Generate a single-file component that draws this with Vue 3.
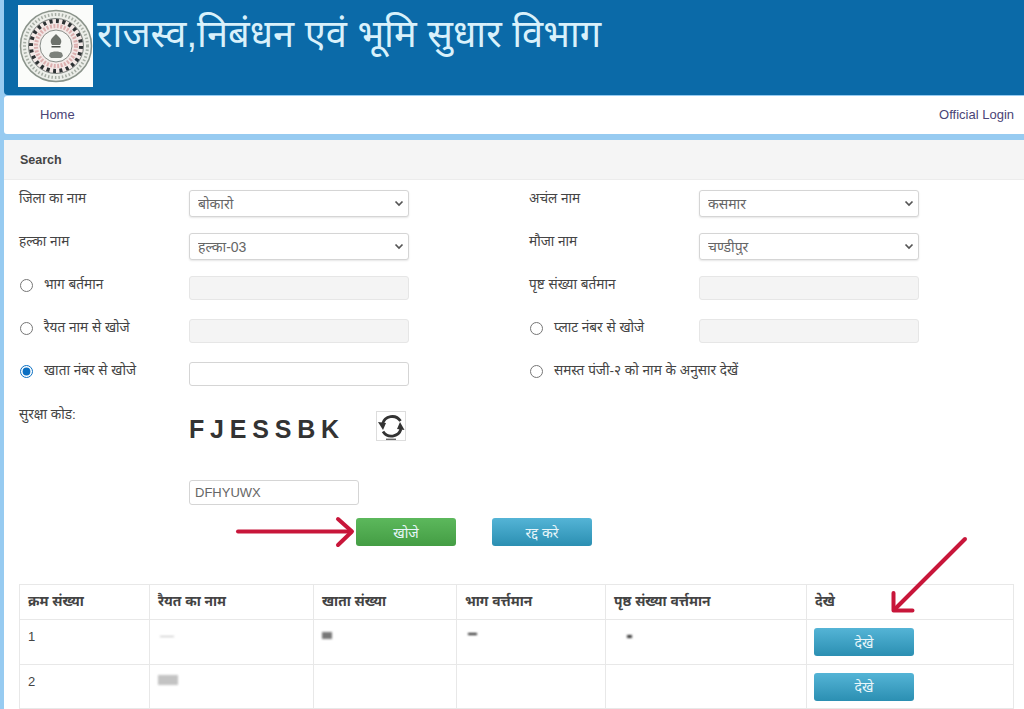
<script setup>
const columns = ['क्रम संख्या', 'रैयत का नाम', 'खाता संख्या', 'भाग वर्त्तमान', 'पृष्ठ संख्या वर्त्तमान', 'देखे']
const rows = [
  { no: 1, smudges: ['name-a', 'khata', 'bhag', 'page'] },
  { no: 2, smudges: ['name-b'] },
]
const has = (row, key) => row.smudges.includes(key)
</script>

<template>
  <div class="page">
    <header class="banner">
      <div class="logo">
        <svg class="seal" width="74" height="74" viewBox="0 0 74 74">
          <circle cx="37" cy="37" r="35.500" fill="#eceee9" stroke="#8b948b" stroke-width="1.500" />
          <circle cx="37" cy="37" r="31.500" fill="none" stroke="#a7aea5" stroke-width="3" stroke-dasharray="1.500 2" />
          <circle cx="37" cy="37" r="27.500" fill="#f3e9e7" stroke="#5c6360" stroke-width="0.800" />
          <circle cx="37" cy="37" r="25" fill="none" stroke="#2c3133" stroke-width="4" stroke-dasharray="3 3.500" />
          <circle cx="37" cy="37" r="20" fill="none" stroke="#dcb0b0" stroke-width="4" stroke-dasharray="2 1.500" />
          <circle cx="37" cy="37" r="16" fill="#f6f7f4" stroke="#6b726d" stroke-width="0.800" />
          <path d="M32 34c-1-3 1-5 2-6l3-3 3 3c1 1 3 3 2 6l-1 2h-8z" fill="#6d726c" />
          <path d="M32.500 37h9v1.500h-9z" fill="#4a4f4a" />
          <path d="M31 44c2-2 10-2 12 0l1 3-2 2H32l-2-2z" fill="#7c817b" />
        </svg>
      </div>
      <h1 class="title">राजस्व,निबंधन एवं भूमि सुधार विभाग</h1>
    </header>

    <nav class="nav">
      <a class="nav-link">Home</a>
      <a class="nav-link">Official Login</a>
    </nav>

    <main class="panel">
      <div class="panel-head">Search</div>

      <div class="form">
        <label class="lbl">जिला का नाम</label>
        <div class="sel-wrap">
          <select class="ctl sel"><option>बोकारो</option></select>
          <svg class="chev" width="10" height="7" viewBox="0 0 10 7"><path d="M1.500 1.500L5 5l3.500-3.500" fill="none" stroke="#555" stroke-width="1.700" /></svg>
        </div>
        <label class="lbl">अचंल नाम</label>
        <div class="sel-wrap">
          <select class="ctl sel"><option>कसमार</option></select>
          <svg class="chev" width="10" height="7" viewBox="0 0 10 7"><path d="M1.500 1.500L5 5l3.500-3.500" fill="none" stroke="#555" stroke-width="1.700" /></svg>
        </div>

        <label class="lbl">हल्का नाम</label>
        <div class="sel-wrap">
          <select class="ctl sel"><option>हल्का-03</option></select>
          <svg class="chev" width="10" height="7" viewBox="0 0 10 7"><path d="M1.500 1.500L5 5l3.500-3.500" fill="none" stroke="#555" stroke-width="1.700" /></svg>
        </div>
        <label class="lbl">मौजा नाम</label>
        <div class="sel-wrap">
          <select class="ctl sel"><option>चण्डीपुर</option></select>
          <svg class="chev" width="10" height="7" viewBox="0 0 10 7"><path d="M1.500 1.500L5 5l3.500-3.500" fill="none" stroke="#555" stroke-width="1.700" /></svg>
        </div>

        <label class="lbl"><input type="radio" name="mode" class="radio" />भाग बर्तमान</label>
        <input class="ctl txt" disabled />
        <label class="lbl">पृष्ट संख्या बर्तमान</label>
        <input class="ctl txt" disabled />

        <label class="lbl"><input type="radio" name="mode" class="radio" />रैयत नाम से खोजे</label>
        <input class="ctl txt" disabled />
        <label class="lbl"><input type="radio" name="mode" class="radio" />प्लाट नंबर से खोजे</label>
        <input class="ctl txt" disabled />

        <label class="lbl"><input type="radio" name="mode" class="radio" checked />खाता नंबर से खोजे</label>
        <input class="ctl txt" />
        <label class="lbl wide"><input type="radio" name="mode" class="radio" />समस्त पंजी-२ को नाम के अनुसार देखें</label>
      </div>

      <div class="captcha">
        <label class="lbl">सुरक्षा कोड:</label>
        <span class="code">FJESSBK</span>
        <span class="refresh">
          <svg width="28" height="28" viewBox="0 0 28 28" fill="none">
            <path d="M5.500 12A10 10 0 0 1 23.500 9" stroke="#333" stroke-width="2.800" />
            <path d="M24 17A10 10 0 0 1 6 19.500" stroke="#333" stroke-width="2.800" />
            <path d="M1 10L9 11 6 18zM27.500 18L20 17 23 10z" fill="#333" />
            <path d="M9 27.300h10" stroke="#666" stroke-width="1.400" />
          </svg>
        </span>
      </div>

      <input class="answer" value="DFHYUWX" />

      <div class="actions">
        <button class="btn green">खोजे</button>
        <button class="btn blue">रद्द करे</button>
      </div>

      <table class="results">
        <colgroup>
          <col class="c1" /><col class="c2" /><col class="c3" /><col class="c4" /><col class="c5" /><col class="c6" />
        </colgroup>
        <thead>
          <tr><th v-for="c in columns" :key="c">{{ c }}</th></tr>
        </thead>
        <tbody>
          <tr v-for="row in rows" :key="row.no">
            <td>{{ row.no }}</td>
            <td>
              <i v-if="has(row, 'name-a')" class="smudge faint"></i>
              <i v-if="has(row, 'name-b')" class="smudge wide-blot"></i>
            </td>
            <td><i v-if="has(row, 'khata')" class="smudge small"></i></td>
            <td><i v-if="has(row, 'bhag')" class="smudge dash"></i></td>
            <td><i v-if="has(row, 'page')" class="smudge dot"></i></td>
            <td class="view-cell"><button class="btn blue">देखे</button></td>
          </tr>
        </tbody>
      </table>
    </main>

    <svg class="annot" width="1024" height="709" viewBox="0 0 1024 709" fill="none">
      <g stroke="#c8163a" stroke-width="4" stroke-linecap="round" stroke-linejoin="round">
        <path d="M238 531.500H351" />
        <path d="M338 519l14 12.500-14 13.500" />
        <path d="M965 539L894 610" />
        <path d="M893.500 593v17.500h19" />
      </g>
    </svg>
  </div>
</template>

<style scoped>
.page {
  position: relative;
  height: 709px;
  overflow: hidden;
  padding-left: 4px;
  box-sizing: border-box;
  background: #97cbf1;
  font-family: "Liberation Sans", "Noto Sans", sans-serif;
  color: #333;
}
.banner {
  height: 95px;
  display: flex;
  align-items: flex-start;
  background: #0b6aa8;
  border-bottom-left-radius: 4px;
  margin-bottom: 1px;
}
.logo {
  width: 75px;
  height: 82px;
  margin: 5px 0 0 14px;
  background: #fbfcfa;
  display: flex;
  align-items: center;
  justify-content: center;
  flex-shrink: 0;
}
.seal {
  filter: blur(0.4px);
}
.title {
  margin: 8px 0 0 4px;
  font-size: 38px;
  line-height: 52px;
  font-weight: 400;
  color: #d9f1fb;
  white-space: nowrap;
}
.nav {
  height: 38px;
  box-sizing: border-box;
  display: flex;
  justify-content: space-between;
  align-items: center;
  padding: 0 10px 2px 36px;
  background: #fff;
  border-radius: 3px 0 0 3px;
  margin-bottom: 6px;
}
.nav-link {
  font-size: 13px;
  color: #4a4476;
}
.panel {
  height: 569px;
  background: #fff;
  border-radius: 3px 0 0 0;
}
.panel-head {
  height: 40px;
  box-sizing: border-box;
  padding: 13px 16px 0;
  background: #f5f5f5;
  border-bottom: 1px solid #ececec;
  font-size: 12.500px;
  font-weight: 700;
  color: #444;
}
.form {
  display: grid;
  grid-template-columns: 170px 220px 120px 170px 220px;
  grid-auto-rows: 27px;
  row-gap: 16px;
  padding: 10px 0 0 15px;
}
.form > :nth-child(4n + 3) {
  grid-column-start: 4;
}
.form > :nth-child(4n + 2) {
  grid-column-start: 2;
}
.form > :nth-child(4n) {
  grid-column-start: 5;
}
.lbl {
  display: block;
  font-size: 13.600px;
  line-height: 17px;
  color: #444;
  white-space: nowrap;
}
.form > .wide {
  grid-column: 4 / span 2;
}
.radio {
  width: 13px;
  height: 13px;
  margin: 0 11px 0 1px;
  vertical-align: -3px;
  accent-color: #0b6fc2;
}
.ctl {
  display: block;
  box-sizing: border-box;
  width: 220px;
  border: 1px solid #d5d5d5;
  border-radius: 3px;
  font: 14px "Liberation Sans", "Noto Sans", sans-serif;
  color: #666;
  outline: none;
}
.sel-wrap {
  position: relative;
}
.sel {
  appearance: none;
  height: 27px;
  padding: 0 0 0 8px;
  background: #fff;
  box-shadow: 0 1px 2px rgba(0, 0, 0, 0.1);
}
.chev {
  position: absolute;
  right: 5px;
  top: 10px;
  pointer-events: none;
}
.txt {
  height: 24px;
  padding: 0 8px;
  background: #fff;
}
.txt:disabled {
  background: #f4f4f4;
  border-color: #e6e6e6;
}
.captcha {
  display: flex;
  align-items: flex-start;
  margin: 15px 0 0 15px;
  height: 76px;
}
.captcha .lbl {
  width: 170px;
  flex-shrink: 0;
  padding-top: 2px;
}
.code {
  margin-top: 11px;
  width: 187px;
  font-size: 25px;
  line-height: 28px;
  font-weight: 700;
  letter-spacing: 5.800px;
  color: #333;
}
.refresh {
  width: 28px;
  height: 28px;
  margin-top: 7px;
  border: 1px solid #ddd;
  display: block;
  background: #fff;
}
.answer {
  display: block;
  box-sizing: border-box;
  width: 170px;
  height: 25px;
  margin: 0 0 13px 185px;
  padding: 0 5px;
  border: 1px solid #d5d5d5;
  border-radius: 3px;
  font: 13px "Liberation Sans", sans-serif;
  color: #666;
  outline: none;
}
.actions {
  display: flex;
  gap: 36px;
  margin-left: 352px;
  height: 66px;
}
.btn {
  width: 100px;
  height: 28px;
  padding: 0;
  border: 0;
  border-radius: 3px;
  color: #e8f6fa;
  font: 14px "Liberation Sans", "Noto Sans", sans-serif;
}
.green {
  background: linear-gradient(#5cb85c, #449d44);
}
.blue {
  background: linear-gradient(#54b4d6, #2b8fb2);
}
.results {
  width: 994px;
  margin-left: 15px;
  table-layout: fixed;
  border-collapse: collapse;
  font-size: 13px;
}
.c1 { width: 130px; }
.c2 { width: 164px; }
.c3 { width: 143px; }
.c4 { width: 149px; }
.c5 { width: 201px; }
.c6 { width: 207px; }
th,
td {
  border: 1px solid #e8e8e8;
  padding: 8px;
  text-align: left;
  vertical-align: top;
  color: #444;
}
th {
  height: 34px;
  box-sizing: border-box;
  padding-top: 7px;
  font-size: 13.800px;
  line-height: 19px;
  font-weight: 700;
}
td {
  height: 44.500px;
  box-sizing: border-box;
  padding-top: 10px;
  line-height: 14px;
}
.view-cell {
  padding: 8px 7px 0;
}
.smudge {
  display: block;
  filter: blur(1px);
}
.faint {
  width: 14px;
  height: 1px;
  margin: 6px 0 0 2px;
  background: #bbb;
}
.wide-blot {
  width: 20px;
  height: 10px;
  background: #aaa;
  opacity: 0.7;
}
.small {
  width: 10px;
  height: 7px;
  margin-top: 2px;
  background: #777;
}
.dash {
  width: 9px;
  height: 2px;
  margin: 3px 0 0 3px;
  background: #222;
}
.dot {
  width: 5px;
  height: 3px;
  margin: 5px 0 0 13px;
  background: #333;
}
.annot {
  position: absolute;
  top: 0;
  left: 0;
  pointer-events: none;
}
</style>

<style>
html,
body {
  margin: 0;
  overflow: hidden;
}
</style>
